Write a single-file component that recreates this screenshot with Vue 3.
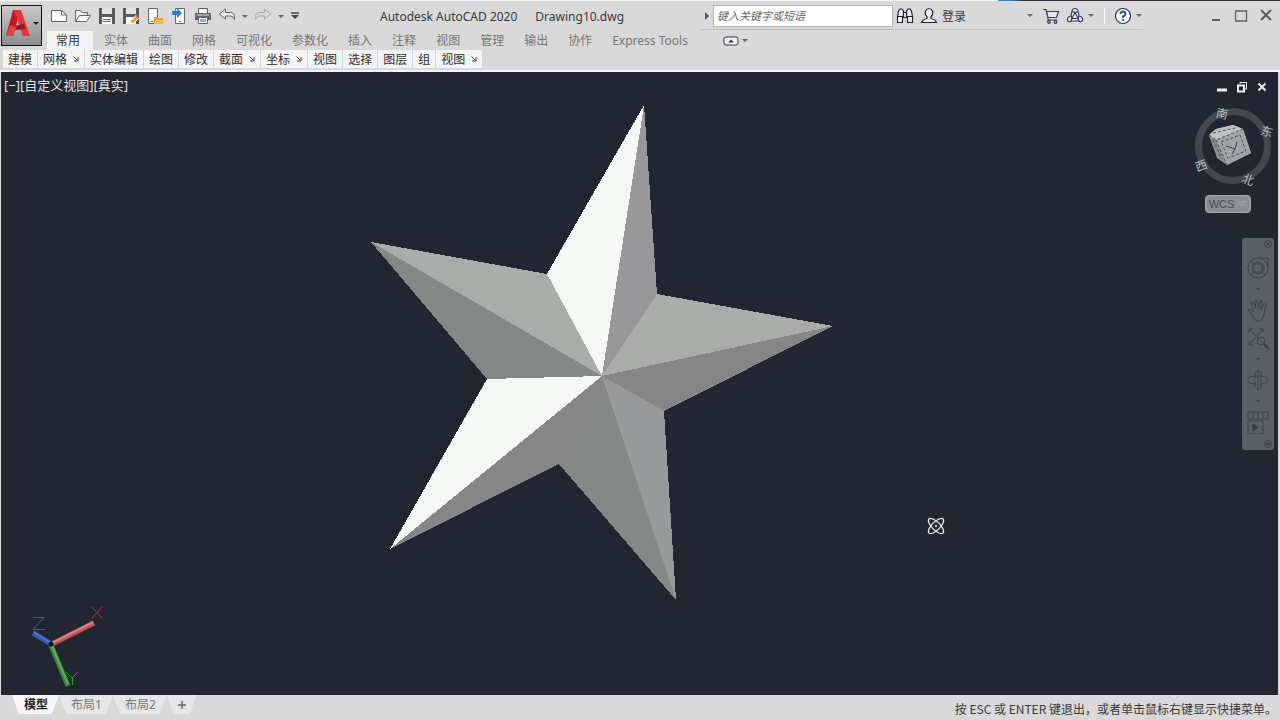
<template>
  <div class="app">
    <div class="desktop-edge"></div>

    <header class="header">
      <div class="header-top">
        <button class="app-button" aria-label="Autodesk AutoCAD">
          <svg width="28" height="32" viewBox="0 0 28 32">
            <path d="M1 28 L8 2 H16 L11 17 L8 28 Z" fill="#c4161c" />
            <path d="M8 2 H16 L25 28 H18 L11 8 Z" fill="#e2373c" />
            <path d="M4 19 L19 16 L21 21 L11 22 L3 28 Z" fill="#a31116" />
            <path d="M1 28 L5 17 L12 19 L7 28 Z" fill="#d9474b" />
          </svg>
          <i class="caret dark"></i>
        </button>

        <div class="bars">
          <div class="title-bar">
            <div class="quick">
              <button class="tool" aria-label="新建">
                <svg viewBox="0 0 18 18" class="line"><path d="M1.500 3.500h10l5 4.500v6.500h-15z" fill="#fafafa" /><path d="M11.500 3.500v4.500h5" /></svg>
              </button>
              <button class="tool" aria-label="打开">
                <svg viewBox="0 0 18 18" class="line"><path d="M1.500 14.500V3.500h5l1.500 2h5.500v3" fill="#eee" /><path d="M1.500 14.500l4-6h11l-4 6z" fill="#fafafa" /></svg>
              </button>
              <button class="tool" aria-label="保存">
                <svg viewBox="0 0 18 18"><path d="M1 1h16v16H1z" fill="#555a60" /><path d="M4 1h10v6H4z" fill="#e2e2e2" /><path d="M4 10h10v7H4z" fill="#fff" /><path d="M5 12.500h8M5 14.500h8" stroke="#666" /></svg>
              </button>
              <button class="tool" aria-label="另存为">
                <svg viewBox="0 0 18 18"><path d="M1 1h16v16H1z" fill="#555a60" /><path d="M4 1h10v6H4z" fill="#e2e2e2" /><path d="M4 10h10v7H4z" fill="#fff" /><path d="M8 17l1-4 5-5 3 3-5 5z" fill="#f0a43c" stroke="#fff" /><path d="M14 8l3 3" stroke="#c55" stroke-width="2" /></svg>
              </button>
              <button class="tool" aria-label="从移动设备打开">
                <svg viewBox="0 0 18 18"><path d="M2.500 1.500h9v15h-9z" fill="#fafafa" stroke="#666" /><path d="M5 14.500h2" stroke="#666" /><path d="M8 17V10h4l1 1h4v6z" fill="#e9a02b" /><path d="M8 17l2-4h8l-2 4z" fill="#f6bc52" /></svg>
              </button>
              <button class="tool" aria-label="保存到移动设备">
                <svg viewBox="0 0 18 18"><path d="M5.500 1.500h9v15h-9z" fill="#fafafa" stroke="#666" /><path d="M9 14.500h2" stroke="#666" /><path d="M2 4h5V1l5 5-5 5V8H2z" fill="#2b7fc4" /></svg>
              </button>
              <button class="tool" aria-label="打印">
                <svg viewBox="0 0 18 18"><path d="M4.500 1.500h9v5h-9z" fill="#fafafa" stroke="#555" /><path d="M1 6h16v7H1z" fill="#62676c" /><path d="M3 8h12" stroke="#ddd" /><path d="M4.500 10.500h9v6h-9z" fill="#fff" stroke="#62676c" /><path d="M6 12h6v3H6z" fill="#7db4dc" /></svg>
              </button>
              <button class="tool" aria-label="放弃">
                <svg viewBox="0 0 18 18" class="line"><path d="M1.500 7l6-5v3.500h5q4 0 4 5v2q-1-3.500-4-3.500h-5v3z" fill="#eee" /></svg>
              </button>
              <button class="drop" aria-label="放弃列表"><i class="caret"></i></button>
              <button class="tool faded" aria-label="重做">
                <svg viewBox="0 0 18 18" class="line"><path d="M16.500 7l-6-5v3.500h-5q-4 0-4 5v2q1-3.500 4-3.500h5v3z" fill="#ddd" /></svg>
              </button>
              <button class="drop" aria-label="重做列表"><i class="caret"></i></button>
              <button class="drop menu" aria-label="自定义快速访问工具栏">
                <svg class="more" viewBox="0 0 8 8"><path d="M0 1h8" stroke="#444" stroke-width="1.500" /><path d="M0 3h8l-4 4z" fill="#444" /></svg>
              </button>
            </div>

            <h1 class="title"><span>Autodesk AutoCAD 2020</span><span>Drawing10.dwg</span></h1>

            <div class="info">
              <button class="expand" aria-label="折叠搜索"><i></i></button>
              <input class="search" type="text" aria-label="搜索" placeholder="键入关键字或短语" />
              <button class="tool" aria-label="查找">
                <svg viewBox="0 0 18 18" class="ink"><path d="M1.500 10l1-6 1.500-2h2l1.500 2v6M10.500 10V4l1.500-2h2l1.500 2 1 6" fill="#e8e8ee" /><path d="M1.500 9.500h5v6h-5zM11.500 9.500h5v6h-5zM7.500 5.500h3v5h-3z" fill="#f4f4f8" /></svg>
              </button>
              <button class="login">
                <svg viewBox="0 0 18 18" class="ink"><path d="M1.500 15.500q1-3 5.500-4V10Q4.500 7 5.500 4 7 1.500 9 1.500t3.500 2.500q1 3-1.500 6v1.500q4.500 1 5.500 4z" fill="#eef" /></svg>
                <span>登录</span>
              </button>
              <button class="drop login-drop" aria-label="登录选项"><i class="caret"></i></button>
              <button class="tool" aria-label="购物车">
                <svg viewBox="0 0 18 18" class="navy"><path d="M1 2.500h3l2 8h9" /><path d="M4.500 4.500h12l-2 6H6z" fill="#e6e8f2" /><path d="M6 10.500v2.500h9" /><circle cx="7" cy="15" r="1.300" /><circle cx="13.500" cy="15" r="1.300" /></svg>
              </button>
              <button class="tool" aria-label="Autodesk App Store">
                <svg viewBox="0 0 18 18" class="navy"><path d="M9 1.500q2.500 0 3 2.500l1 5q4 1 3.500 4-1 3-4 1H5.500q-3 2-4-1-.5-3 3.500-4l1-5q.5-2.500 3-2.500z" fill="#e6e8f2" /><path d="M9 5.500l3 6H6z" fill="#fff" /><path d="M6 4.500l3 1 3-1M5 9l1 2.500-1 2.500M13 9l-1 2.500 1 2.500" /></svg>
              </button>
              <button class="drop narrow" aria-label="应用程序"><i class="caret"></i></button>
              <span class="divider"></span>
              <button class="tool" aria-label="帮助">
                <svg viewBox="0 0 18 18"><circle cx="9" cy="9" r="7.500" fill="#fff" stroke="#2a2f50" stroke-width="1.200" /><path d="M6.500 7q0-2.500 2.500-2.500T11.500 7Q11.500 8.500 9 9.500v1.500" fill="none" stroke="#2457b8" stroke-width="2" /><path d="M8 12h2v2H8z" fill="#2457b8" /></svg>
              </button>
              <button class="drop narrow" aria-label="帮助菜单"><i class="caret"></i></button>
            </div>

            <div class="window-buttons">
              <button aria-label="最小化"><svg viewBox="0 0 14 14"><path d="M3 11h8" /></svg></button>
              <button aria-label="最大化"><svg viewBox="0 0 14 14"><path d="M1.500 2h11v10h-11z" stroke-width="1.300" /></svg></button>
              <button aria-label="关闭"><svg viewBox="0 0 14 14"><path d="M2 1l10 10M12 1L2 11" stroke-width="2" /></svg></button>
            </div>
          </div>

          <nav class="tabs">
            <button v-for="tab in tabs" :key="tab" :class="{ active: tab === currentTab }" @click="currentTab = tab">{{ tab }}</button>
            <button class="minimize" aria-label="最小化功能区">
              <svg width="16" height="10" viewBox="0 0 16 10"><rect x="1" y="1" width="14" height="8" rx="2" fill="#f2f2f4" stroke="#33384a" /><path d="M5 6.500h6l-3-3z" fill="#33384a" /></svg>
              <i class="caret"></i>
            </button>
          </nav>
        </div>
      </div>

      <div class="panels">
        <button v-for="(panel, index) in panels" :key="index">
          {{ panel.name }}
          <svg v-if="panel.launcher" width="6" height="6" viewBox="0 0 6 6"><path d="M0.500 0.500l4 4M5 1v4H1" fill="none" stroke="#444" /></svg>
        </button>
      </div>
    </header>

    <main class="viewport">
      <svg class="scene" viewBox="0 0 1277 623">
        <polygon v-for="(face, index) in faces" :key="index" :points="face.points" :fill="face.fill" shape-rendering="crispEdges" />
      </svg>

      <div class="view-label">
        <button>[−]</button><button>[自定义视图]</button><button>[真实]</button>
      </div>

      <div class="view-buttons">
        <button aria-label="最小化视图"><svg viewBox="0 0 12 12"><path d="M1 9h10" stroke-width="3" /></svg></button>
        <button aria-label="还原视图"><svg viewBox="0 0 12 12"><path d="M4 3V1.500h6.500V8H9" /><path d="M2 4.500h6v6H2z" stroke-width="2" /></svg></button>
        <button aria-label="关闭视图"><svg viewBox="0 0 12 12"><path d="M2.500 2.500l7 7M9.500 2.500l-7 7" stroke-width="2" /></svg></button>
      </div>

      <div class="compass">
        <svg width="84" height="86" viewBox="0 0 84 86">
          <circle cx="41" cy="43" r="34.500" fill="none" stroke="#434752" stroke-width="7" />
          <path d="M17 32l7-6 17-4 10 4 8 24-24 12-10-10z" fill="#a9abad" />
          <path d="M17 32l7-6 17-4 10 4-27 11z" fill="#c0c1c2" />
          <path d="M17 32l7 5 11 25-10-7z" fill="#8b8e92" />
          <path d="M24 37l27-11 8 24-24 12z" fill="#a2a5a8" />
          <path d="M17 32l7 5 27-11M24 37l11 25M21 30l22-5M21 37l9 19M29 39l19-7 6 16-18 7z" fill="none" stroke="#4a4e55" stroke-dasharray="3 2" />
          <path d="M34 43l9 3 2-7M43 46l-3 5" fill="none" stroke="#333d58" />
          <g class="points">
            <text x="24" y="15" transform="rotate(12 30 11)">南</text>
            <text x="69" y="33" transform="rotate(15 75 28)">东</text>
            <text x="3" y="67" transform="rotate(-20 9 62)">西</text>
            <text x="50" y="81" transform="rotate(20 56 77)">北</text>
          </g>
        </svg>
        <button class="wcs">WCS <svg width="10" height="6" viewBox="0 0 10 6"><path d="M1 1h8L5 5z" fill="none" stroke="#a0a3ab" /></svg></button>
      </div>

      <div class="nav-bar">
        <button class="dot" aria-label="关闭导航栏"><svg width="8" height="8" viewBox="0 0 8 8"><circle cx="4" cy="4" r="3.500" /><path d="M2.500 2.500l3 3M5.500 2.500l-3 3" /></svg></button>
        <button aria-label="控制盘"><svg viewBox="0 0 24 24"><path d="M12 2h10v9" /><circle cx="12" cy="12" r="10" /><circle cx="12" cy="12" r="6" /><path d="M8 8h8v8H8zM5 5l3 3M5 19l3-3M16 16l3 3" /></svg></button>
        <i class="caret"></i>
        <button aria-label="平移"><svg viewBox="0 0 24 24"><path d="M7 18L3 13q-1-2 1-2l4 3L5 5q0-2 2-1l3 7-1-8q1-2 2 0l2 8 1-8q1-2 2 0l-1 9 3-6q2-1 2 1l-2 9q-1 7-6 7-4 0-5-5z" /></svg></button>
        <button class="zoom" aria-label="缩放"><svg viewBox="0 0 24 24"><path d="M3 3l18 18M17 3L3 19M3 7V3h4M13 3h4v4M3 15v4h4" /><circle cx="15" cy="15" r="4" /><path d="M18 18l5 5" stroke-width="2.500" /></svg></button>
        <i class="caret"></i>
        <button aria-label="动态观察"><svg viewBox="0 0 24 24"><path d="M12 2v20M9 5l3-3 3 3M9 19l3 3 3-3" /><path d="M10 16q-8 0-8-4t9-4q11 0 11 4 0 3-7 4M7 13l3 3-3 3" /><path d="M9 5v12M15 5v14" /></svg></button>
        <i class="caret"></i>
        <button aria-label="ShowMotion"><svg viewBox="0 0 24 24"><path d="M2 2h20v7H2zM7 2v7M12 2v7M17 2v7M2 11h15v13H2z" /><path d="M7 14v7l5-3.500z" fill="#33373e" /></svg></button>
        <button class="dot" aria-label="导航栏选项"><svg width="8" height="8" viewBox="0 0 8 8"><circle cx="4" cy="4" r="3.500" /><path d="M2 3.500h4M2 5h4" /></svg></button>
      </div>

      <!-- Cursor de órbita -->
      <svg class="cursor" width="18" height="18" viewBox="0 0 18 18">
        <g fill="none" stroke="#f2f2f2" stroke-width="1.200">
          <ellipse cx="9" cy="9" rx="10" ry="4" transform="rotate(45 9 9)" />
          <ellipse cx="9" cy="9" rx="10" ry="4" transform="rotate(-45 9 9)" />
        </g>
        <circle cx="9" cy="9" r="1" fill="#fff" />
      </svg>

      <!-- Ícone do sistema de coordenadas -->
      <svg class="ucs" width="80" height="86" viewBox="0 0 80 86">
        <g stroke-width="5">
          <path d="M24 40L66 19" stroke="#bd5657" />
          <path d="M23 40L5 29" stroke="#2d5dab" />
          <path d="M23 41L40 82" stroke="#37843b" />
        </g>
        <g stroke-width="2">
          <path d="M24 39L65 18" stroke="#dd7c7a" />
          <path d="M23 39L6 28" stroke="#4b7cc8" />
          <path d="M24 42L40 80" stroke="#63ac61" />
        </g>
        <circle cx="23" cy="40" r="2.500" fill="#14161d" />
        <path d="M64 3l10 11M74 3L64 14" stroke="#c42a3c" />
        <path d="M5 13.500h11L5 25.500h12" fill="none" stroke="#1766d8" />
        <path d="M38 68l6 6 6-6M44.500 74v7" fill="none" stroke="#17a528" />
      </svg>
    </main>

    <footer class="status">
      <nav class="layouts">
        <button v-for="name in layouts" :key="name" :class="{ active: name === currentLayout }" @click="currentLayout = name">{{ name }}</button>
        <button class="add" aria-label="新建布局"><svg width="10" height="10" viewBox="0 0 10 10"><path d="M5 1v8M1 5h8" stroke="#666" stroke-width="1.500" /></svg></button>
      </nav>
      <p>按 ESC 或 ENTER 键退出，或者单击鼠标右键显示快捷菜单。</p>
    </footer>
  </div>
</template>

<script setup>
import { ref } from 'vue'

const tabs = ['常用', '实体', '曲面', '网格', '可视化', '参数化', '插入', '注释', '视图', '管理', '输出', '协作', 'Express Tools']
const currentTab = ref('常用')

const panels = [
  { name: '建模' },
  { name: '网格', launcher: true },
  { name: '实体编辑' },
  { name: '绘图' },
  { name: '修改' },
  { name: '截面', launcher: true },
  { name: '坐标', launcher: true },
  { name: '视图' },
  { name: '选择' },
  { name: '图层' },
  { name: '组' },
  { name: '视图', launcher: true }
]

const layouts = ['模型', '布局1', '布局2']
const currentLayout = ref('模型')

// each face joins the raised centre with two neighbouring corners
const center = [601, 304]
const corners = [
  [643, 33], [656, 222], [832, 254], [663, 339], [675, 528],
  [558, 392], [389, 477], [486, 307], [370, 170], [546, 202]
]
const fills = ['#98989a', '#aaacaa', '#868686', '#98999a', '#868887', '#868686', '#f5f7f4', '#868887', '#aaacaa', '#f5f7f4']

const faces = corners.map((corner, i) => {
  const next = corners[(i + 1) % corners.length]
  return { points: [center, corner, next].join(' '), fill: fills[i] }
})
</script>

<style>
body {
  margin: 0;
}
</style>

<style scoped>
.app {
  display: flex;
  flex-direction: column;
  height: 100vh;
  overflow: hidden;
  background-color: #d9d9d9;
  color: #3a3a3a;
  font-family: "Noto Sans", "Noto Sans CJK SC", sans-serif;
  font-size: 12px;
}

button {
  padding: 0;
  border: none;
  background: none;
  color: inherit;
  font: inherit;
  white-space: nowrap;
}

svg {
  display: block;
  flex: none;
}

.desktop-edge {
  flex: none;
  height: 1px;
  background: linear-gradient(to right, #f6f6f6 78%, #3f7db5 78%, #3f7db5 79%, #33303c 80%);
}

.header {
  flex: none;
  border-bottom: 2px solid #f3f5f8;
}

.header-top {
  display: flex;
  height: 49px;
}

.app-button {
  display: flex;
  align-items: center;
  flex: none;
  box-sizing: border-box;
  width: 41px;
  height: 41px;
  margin: 4px 0 0 1px;
  padding: 0 0 4px 3px;
  border: 1px solid #111;
  background: linear-gradient(#c9c9c9, #8c8c8c);
}

.caret {
  border: 3px solid transparent;
  border-top-color: #666;
  border-bottom: none;
}

.caret.dark {
  border-top-color: #222;
}

.bars {
  display: flex;
  flex-direction: column;
  flex: 1;
  min-width: 0;
}

.title-bar {
  display: flex;
  align-items: center;
  height: 30px;
}

.quick,
.info {
  display: flex;
  align-items: center;
  flex: none;
}

.quick {
  padding-left: 5px;
}

.tool {
  display: flex;
  justify-content: center;
  width: 24px;
}

.tool svg,
.login svg {
  width: 18px;
  height: 18px;
}

.drop {
  display: flex;
  justify-content: center;
  width: 12px;
}

.drop.menu {
  width: 16px;
}

.faded {
  opacity: 0.4;
}

.line {
  fill: none;
  stroke: #606468;
}

.ink {
  fill: none;
  stroke: #24262e;
  stroke-width: 1.2;
}

.navy {
  fill: none;
  stroke: #343a62;
  stroke-width: 1.2;
}

.more {
  width: 8px;
  height: 8px;
}

.title {
  display: flex;
  justify-content: center;
  flex: 1;
  gap: 18px;
  margin: 0;
  font-size: 12px;
  font-weight: normal;
  white-space: nowrap;
}

.info {
  height: 26px;
  border-bottom: 1px solid #bfbfbf;
}

.expand {
  width: 12px;
}

.expand i {
  display: block;
  width: 0;
  margin-left: 4px;
  border: 4px solid transparent;
  border-left-color: #555;
  border-right: none;
}

.search {
  box-sizing: border-box;
  width: 180px;
  height: 22px;
  padding: 0 3px;
  border: 1px solid #b4b4b4;
  background-color: #fff;
  font: italic 11px "Noto Sans", "Noto Sans CJK SC", sans-serif;
}

.search::placeholder {
  color: #666;
}

.login {
  display: flex;
  align-items: center;
  gap: 4px;
  padding-left: 3px;
}

.login-drop {
  margin: 0 3px 0 58px;
}

.narrow {
  width: 8px;
}

.divider {
  width: 1px;
  height: 16px;
  margin: 0 6px 0 9px;
  background-color: #fafafa;
}

.window-buttons {
  display: flex;
  flex: none;
  gap: 11px;
  margin-left: 66px;
  padding-right: 7px;
}

.window-buttons svg {
  width: 14px;
  height: 14px;
  fill: none;
  stroke: #5c5c5c;
  stroke-width: 2;
}

.tabs {
  display: flex;
  height: 19px;
  padding-left: 5px;
  color: #777;
}

.tabs button {
  padding: 0 10px;
  line-height: 19px;
}

.tabs .active {
  margin-right: 1px;
  padding: 0 13px 0 9px;
  background-color: #f4f4f4;
  color: #333;
}

.tabs .minimize {
  display: flex;
  align-items: center;
  gap: 3px;
  padding-left: 25px;
}

.panels {
  display: flex;
  height: 18px;
  margin-bottom: 2px;
  padding-left: 3px;
}

.panels button {
  display: flex;
  align-items: center;
  gap: 6px;
  padding: 0 5px;
  border-right: 1px solid #d6d6d6;
  background-color: #f4f4f4;
  color: #2f2f2f;
}

.viewport {
  position: relative;
  flex: 1;
  min-height: 0;
  margin: 0 2px 0 1px;
  background-color: #222632;
}

.scene {
  width: 100%;
  height: 100%;
}

.view-label {
  position: absolute;
  top: 4px;
  left: 3px;
  display: flex;
  color: #e4e4e6;
  font-size: 13px;
  line-height: 18px;
}

.view-buttons {
  position: absolute;
  top: 9px;
  right: 10px;
  display: flex;
  gap: 8px;
}

.view-buttons svg {
  width: 12px;
  height: 12px;
  fill: none;
  stroke: #eceef2;
}

.compass {
  position: absolute;
  top: 31px;
  right: 2px;
  display: flex;
  flex-direction: column;
  align-items: center;
  gap: 6px;
}

.points {
  fill: #b9bbc0;
  font-size: 12px;
}

.wcs {
  display: flex;
  align-items: center;
  gap: 3px;
  height: 18px;
  margin-right: 12px;
  padding: 0 3px;
  border: 1px solid #a3a6af;
  border-radius: 4px;
  background-color: #8b8e99;
  color: #454955;
  font-family: "Liberation Sans", sans-serif;
  font-size: 11px;
}

.nav-bar {
  position: absolute;
  top: 166px;
  right: 4px;
  display: flex;
  flex-direction: column;
  align-items: center;
  box-sizing: border-box;
  width: 32px;
  height: 212px;
  padding: 2px;
  border-radius: 3px;
  background-color: #5b6065;
}

.nav-bar svg {
  fill: none;
  stroke: #3d4249;
}

.nav-bar button:not(.dot) svg {
  width: 24px;
  height: 24px;
}

.nav-bar .dot {
  align-self: flex-end;
}

.nav-bar button:nth-child(2) {
  margin-top: 8px;
}

.nav-bar .zoom {
  margin-top: 4px;
}

.nav-bar .caret {
  margin: 8px 0;
  border-width: 2px;
  border-bottom-width: 0;
  border-top-color: #3d4249;
}

.nav-bar .dot:last-child {
  margin-top: auto;
}

.cursor {
  position: absolute;
  top: 445px;
  left: 926px;
}

.ucs {
  position: absolute;
  bottom: 5px;
  left: 27px;
}

.status {
  display: flex;
  justify-content: space-between;
  flex: none;
  height: 25px;
}

.status p {
  margin: 0;
  padding-right: 3px;
  font-family: "Noto Sans CJK SC", sans-serif;
  line-height: 27px;
  white-space: nowrap;
}

.layouts {
  display: flex;
  height: 19px;
  padding-left: 12px;
}

.layouts button {
  padding: 0 11px 0 12px;
  background-color: #e6e6e6;
  clip-path: polygon(0 0, 100% 0, calc(100% - 7px) 100%, 7px 100%);
  color: #777;
  line-height: 19px;
}

.layouts .active {
  padding: 0 11px 0 12px;
  background-color: #f7f7f7;
  color: #222;
  font-weight: bold;
}

.layouts .add {
  padding: 0 10px;
}
</style>
